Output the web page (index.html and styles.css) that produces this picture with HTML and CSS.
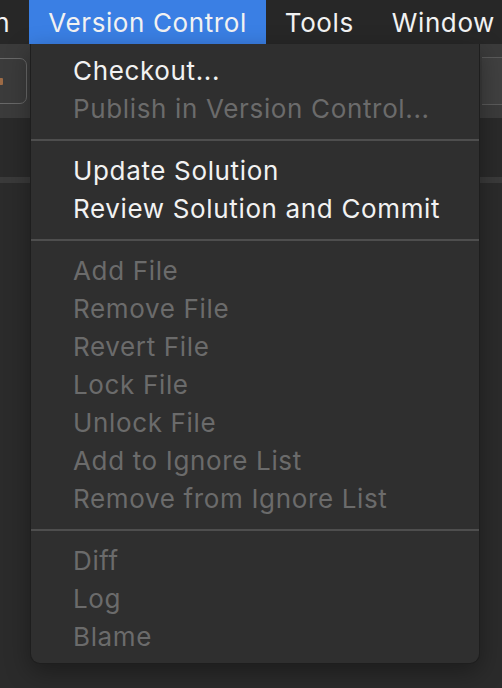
FILE: index.html
```html
<!DOCTYPE html>
<html>
<head>
<meta charset="utf-8">
<link rel="stylesheet" href="styles.css">
</head>
<body>
<div class="screen">
  <div class="menubar">
    <span class="mb-item mb-first">Run</span>
    <span class="mb-item mb-active">Version Control</span>
    <span class="mb-item">Tools</span>
    <span class="mb-item">Window</span>
  </div>
  <div class="toolbar">
    <div class="tb-button"><span class="tb-glyph"></span></div>
    <div class="tb-search"><span class="tb-placeholder">fo</span></div>
  </div>
  <div class="strip"></div>
  <div class="content"></div>

  <div class="menu">
    <div class="mi">Checkout...</div>
    <div class="mi dis">Publish in Version Control...</div>
    <div class="sep"></div>
    <div class="mi">Update Solution</div>
    <div class="mi">Review Solution and Commit</div>
    <div class="sep"></div>
    <div class="mi dis">Add File</div>
    <div class="mi dis">Remove File</div>
    <div class="mi dis">Revert File</div>
    <div class="mi dis">Lock File</div>
    <div class="mi dis">Unlock File</div>
    <div class="mi dis">Add to Ignore List</div>
    <div class="mi dis">Remove from Ignore List</div>
    <div class="sep"></div>
    <div class="mi dis">Diff</div>
    <div class="mi dis">Log</div>
    <div class="mi dis">Blame</div>
  </div>
</div>
</body>
</html>
```
FILE: styles.css
```css
html, body {
  margin: 0;
  padding: 0;
  background: #2b2b2b;
}
.screen {
  position: relative;
  width: 502px;
  height: 688px;
  overflow: hidden;
  font-family: Inter, "Noto Sans", sans-serif;
  font-size: 26px;
  color: #f2f2f2;
}
.menubar {
  display: flex;
  height: 44px;
  align-items: stretch;
  background: #272727;
  white-space: nowrap;
}
.mb-item {
  display: flex;
  align-items: center;
  padding: 0 19px;
  letter-spacing: 0.6px;
}
.mb-first {
  margin-left: -58px;
}
.mb-active {
  background: #3a7fe4;
}
.toolbar {
  display: flex;
  justify-content: space-between;
  align-items: center;
  height: 74px;
  background: #3b3b3b;
}
.tb-button {
  width: 60px;
  height: 46px;
  margin-left: -33px;
  border: 1px solid #686868;
  border-radius: 7px;
  box-sizing: border-box;
  display: flex;
  align-items: center;
  justify-content: flex-end;
  padding-right: 23px;
}
.tb-glyph {
  width: 4px;
  height: 7px;
  border-radius: 1px;
  background: #9c6a45;
}
.tb-search {
  width: 60px;
  height: 48px;
  box-sizing: border-box;
  border-top: 1px solid #5a5a5a;
  border-bottom: 1px solid #5a5a5a;
  background: #404040;
  display: flex;
  align-items: center;
  padding-left: 25px;
  margin-right: -40px;
  overflow: hidden;
}
.tb-placeholder {
  color: #777;
  font-size: 26px;
}
.strip {
  height: 59px;
  background: #2a2a2a;
}
.content {
  height: 6px;
  background: #3a3a3a;
}
.menu {
  position: absolute;
  left: 30px;
  top: 44px;
  width: 450px;
  box-sizing: border-box;
  padding: 8px 0 7px;
  background: #2f2f2f;
  border-radius: 0 0 10px 10px;
  border: 1px solid #1e1e1e;
  border-top: none;
  box-shadow: 0 8px 24px rgba(0, 0, 0, 0.35);
}
.mi {
  height: 38px;
  line-height: 38px;
  padding-left: 42px;
  white-space: nowrap;
  color: #f2f2f2;
  letter-spacing: 0.65px;
}
.mi.dis {
  color: #6b6b6b;
}
.sep {
  height: 2px;
  margin: 11px 0;
  background: #4e4e4e;
}
```
